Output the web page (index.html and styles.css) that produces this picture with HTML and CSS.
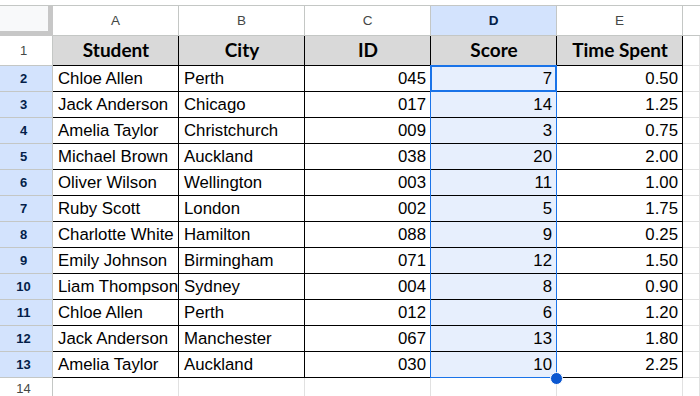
FILE: index.html
```html
<!DOCTYPE html>
<html>
<head>
<meta charset="utf-8">
<link rel="stylesheet" href="styles.css">
</head>
<body>
<div class="sheet">
  <div class="corner"></div>
  <div class="ch">A</div><div class="ch">B</div><div class="ch">C</div><div class="ch sel">D</div><div class="ch">E</div><div class="ch last"></div>

  <div class="rh">1</div>
  <div class="c hd">Student</div><div class="c hd">City</div><div class="c hd">ID</div><div class="c hd">Score</div><div class="c hd">Time Spent</div><div class="e"></div>

  <div class="rh sel">2</div>
  <div class="c">Chloe Allen</div><div class="c">Perth</div><div class="c num">045</div><div class="c num s">7</div><div class="c num">0.50</div><div class="e"></div>

  <div class="rh sel">3</div>
  <div class="c">Jack Anderson</div><div class="c">Chicago</div><div class="c num">017</div><div class="c num s">14</div><div class="c num">1.25</div><div class="e"></div>

  <div class="rh sel">4</div>
  <div class="c">Amelia Taylor</div><div class="c">Christchurch</div><div class="c num">009</div><div class="c num s">3</div><div class="c num">0.75</div><div class="e"></div>

  <div class="rh sel">5</div>
  <div class="c">Michael Brown</div><div class="c">Auckland</div><div class="c num">038</div><div class="c num s">20</div><div class="c num">2.00</div><div class="e"></div>

  <div class="rh sel">6</div>
  <div class="c">Oliver Wilson</div><div class="c">Wellington</div><div class="c num">003</div><div class="c num s">11</div><div class="c num">1.00</div><div class="e"></div>

  <div class="rh sel">7</div>
  <div class="c">Ruby Scott</div><div class="c">London</div><div class="c num">002</div><div class="c num s">5</div><div class="c num">1.75</div><div class="e"></div>

  <div class="rh sel">8</div>
  <div class="c">Charlotte White</div><div class="c">Hamilton</div><div class="c num">088</div><div class="c num s">9</div><div class="c num">0.25</div><div class="e"></div>

  <div class="rh sel">9</div>
  <div class="c">Emily Johnson</div><div class="c">Birmingham</div><div class="c num">071</div><div class="c num s">12</div><div class="c num">1.50</div><div class="e"></div>

  <div class="rh sel">10</div>
  <div class="c">Liam Thompson</div><div class="c">Sydney</div><div class="c num">004</div><div class="c num s">8</div><div class="c num">0.90</div><div class="e"></div>

  <div class="rh sel">11</div>
  <div class="c">Chloe Allen</div><div class="c">Perth</div><div class="c num">012</div><div class="c num s">6</div><div class="c num">1.20</div><div class="e"></div>

  <div class="rh sel">12</div>
  <div class="c">Jack Anderson</div><div class="c">Manchester</div><div class="c num">067</div><div class="c num s">13</div><div class="c num">1.80</div><div class="e"></div>

  <div class="rh sel">13</div>
  <div class="c">Amelia Taylor</div><div class="c">Auckland</div><div class="c num">030</div><div class="c num s">10</div><div class="c num">2.25</div><div class="e"></div>

  <div class="rh top">14</div>
  <div class="e"></div><div class="e"></div><div class="e"></div><div class="e"></div><div class="e"></div><div class="e"></div>

  <div class="range"></div>
  <div class="active"></div>
  <div class="handle"></div>
</div>
</body>
</html>
```
FILE: styles.css
```css
html, body {
  margin: 0;
  padding: 0;
  background: #ffffff;
  overflow: hidden;
}

.sheet {
  position: relative;
  margin-top: 5px;
  border-top: 1px solid #c4c7c5;
  display: grid;
  grid-template-columns: 53px repeat(5, 126px) 1fr;
  grid-template-rows: 30px 30px repeat(13, 26px);
  font-family: "Liberation Sans", Arial, sans-serif;
}

.sheet > div {
  box-sizing: border-box;
  white-space: nowrap;
  overflow: hidden;
}

.corner {
  background: #f8f9fa;
  border-right: 5px solid #c7c7c7;
  border-bottom: 5px solid #c7c7c7;
}

.ch {
  border-right: 1px solid #c4c7c5;
  border-bottom: 1px solid #c4c7c5;
  color: #444746;
  font-size: 13.5px;
  line-height: 29px;
  text-align: center;
}

.ch.sel {
  background: #d3e3fd;
  color: #041e49;
  font-weight: bold;
}

.ch.last {
  border-right: none;
}

.rh {
  border-right: 1px solid #c4c7c5;
  border-bottom: 1px solid #c4c7c5;
  color: #444746;
  font-size: 13px;
  text-align: center;
  padding-right: 5px;
  display: flex;
  align-items: center;
  justify-content: center;
}

.rh.top {
  align-items: flex-start;
  padding-top: 3px;
}

.rh.sel {
  background: #d3e3fd;
  color: #041e49;
  font-weight: bold;
}

.c {
  border-right: 1px solid #000000;
  border-bottom: 1px solid #000000;
  color: #000000;
  font-size: 16.8px;
  line-height: 25px;
  padding: 0 4px 0 5px;
}

.c.hd {
  background: #d9d9d9;
  font-family: Lato, "Liberation Sans", sans-serif;
  font-weight: bold;
  font-size: 19px;
  line-height: 27px;
  text-align: center;
}

.c.num {
  text-align: right;
}

.c.s {
  background: #e7effd;
}

.e {
  border-right: 1px solid #e1e1e1;
  border-bottom: 1px solid #e1e1e1;
}

.range {
  position: absolute;
  left: 430px;
  top: 59px;
  width: 127px;
  height: 313px;
  box-sizing: border-box;
  border: 1px solid #1a73e8;
}

.active {
  position: absolute;
  left: 430px;
  top: 59px;
  width: 127px;
  height: 27px;
  box-sizing: border-box;
  border: 2px solid #1a73e8;
}

.handle {
  position: absolute;
  left: 550px;
  top: 366px;
  width: 13px;
  height: 13px;
  box-sizing: border-box;
  border-radius: 50%;
  background: #0b57d0;
  border: 1px solid #ffffff;
}
```
